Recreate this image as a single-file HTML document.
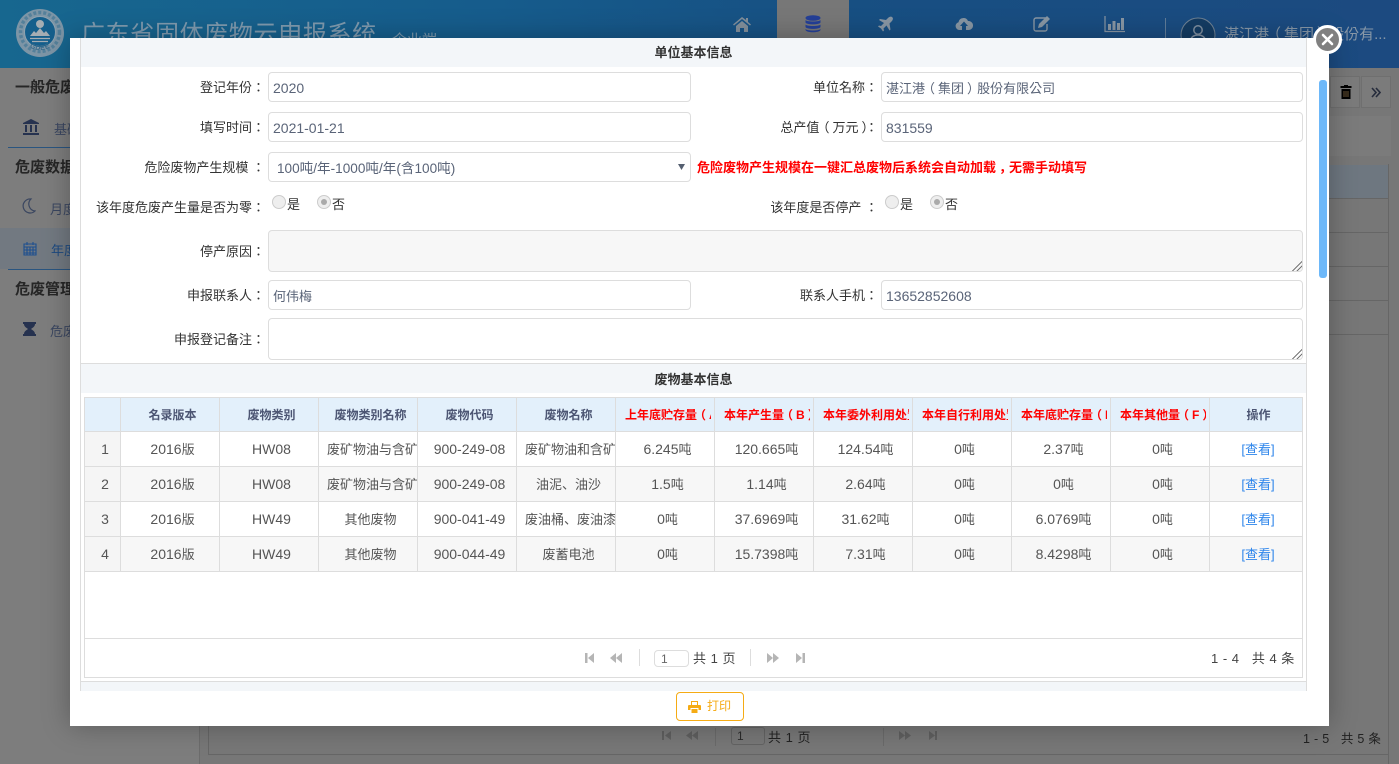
<!DOCTYPE html>
<html lang="zh-TW"><head><meta charset="utf-8"><title>广东省固体废物云申报系统</title>
<style>
*{box-sizing:border-box}
html,body{margin:0;padding:0;width:1399px;height:764px;overflow:hidden;background:#777}
body{position:relative;font-family:"Liberation Sans","Noto Sans CJK TC",sans-serif;font-size:13px;color:#333}
i{font-style:normal;font-size:14px;line-height:0}
u{text-decoration:none;position:relative;left:-3px}
s{text-decoration:none;position:relative;left:3px}
.a{position:absolute;white-space:nowrap}
svg{position:absolute;display:block}
.l{position:absolute;white-space:nowrap;text-align:right;height:18px;line-height:18px;color:#333;margin-top:1px}
.i{position:absolute;border:1px solid #ddd;border-radius:4px;background:#fff;color:#5a6478;padding:1px 0 0 4px;line-height:29px;white-space:nowrap;font-size:13px}
.r{position:absolute;width:14px;height:14px;border-radius:50%;background:#eee;border:1px solid #ccc}
.r.k:after{content:"";position:absolute;left:3px;top:3px;width:6px;height:6px;border-radius:50%;background:#aaa}
.h{position:absolute;left:81px;width:1225px;height:29px;background:#f3f6f9;text-align:center;font-weight:bold;line-height:29px;font-size:13px;color:#333}
.hl{position:absolute;background:#ddd}
.grip{position:absolute;width:11px;height:11px;background:linear-gradient(135deg,transparent 54%,#777 54%,#777 61%,transparent 61%,transparent 73%,#777 73%,#777 80%,transparent 80%)}
.c{position:absolute;overflow:hidden;white-space:nowrap;text-align:center;border-right:1px solid #ddd;border-bottom:1px solid #ddd;line-height:35px;height:35px;color:#555;font-size:13px;padding-left:5px}
.c.tl{text-align:left;padding-left:8px}
.c.lk{color:#2f86eb;border-right:0;width:92px;padding-left:4px}
.th{background:#e3f0fb;color:#4c5573;font-size:12px;font-weight:bold;line-height:35px;height:34px;padding-left:5px}
.th.red{color:#f00;text-align:left;padding-left:9px}
.th.red span{display:block;overflow:hidden;width:86px}
.g{background:#f5f5f5}
.side{position:absolute;white-space:nowrap;font-size:15px;font-weight:bold;color:#262626;line-height:20px}
</style></head><body>

<!-- dimmed page -->
<div class="a" style="left:0;top:0;width:1399px;height:68px;background:linear-gradient(90deg,#17678f 0,#165c8c 35%,#174f82 60%,#1c4a80 100%)"></div>
<div class="a" style="left:0;top:68px;width:1399px;height:696px;background:#777"></div>
<div class="a" style="left:0;top:68px;width:200px;height:696px;background:#7d7d7d"></div>
<div class="a" style="left:0;top:228px;width:200px;height:41px;background:#727981"></div>
<div class="a" style="left:8px;top:147px;width:192px;height:1px;background:#2a5580"></div>
<div class="a" style="left:8px;top:269px;width:192px;height:1px;background:#2a5580"></div>
<div class="side" style="left:15px;top:78px">一般危废</div>
<div class="side" style="left:15px;top:158px">危废数据</div>
<div class="side" style="left:15px;top:280px">危废管理</div>
<div class="a" style="left:54px;top:119px;font-size:13px;color:#3a4660">基础</div>
<div class="a" style="left:50px;top:199px;font-size:13px;color:#3a4660">月度</div>
<div class="a" style="left:51px;top:240px;font-size:13px;color:#1d4a80">年度</div>
<div class="a" style="left:50px;top:321px;font-size:13px;color:#3a4660">危废</div>
<svg style="left:22px;top:118px" width="18" height="18" viewBox="0 0 18 18"><path d="M9 1 1 5v1h16V5zM3 7h2v7H3zM8 7h2v7H8zM13 7h2v7h-2zM1 15h16v2H1z" fill="#26324f"/></svg>
<svg style="left:22px;top:198px" width="14" height="16" viewBox="0 0 14 16"><path d="M9 1a7 7 0 1 0 4 12A7 7 0 0 1 9 1z" fill="none" stroke="#3a4660" stroke-width="1.2"/></svg>
<svg style="left:23px;top:241px" width="14" height="15" viewBox="0 0 14 15"><path d="M1 3h12v11H1zM1 6h12M4 1v3M10 1v3M4 6v8M7 6v8M10 6v8M1 9h12M1 12h12" fill="none" stroke="#1d4f8f" stroke-width="1.1"/></svg>
<svg style="left:23px;top:322px" width="13" height="14" viewBox="0 0 13 14"><path d="M0 0h13v2h-1c0 3-3 4-4 5 1 1 4 2 4 5h1v2H0v-2h1c0-3 3-4 4-5-1-1-4-2-4-5H0z" fill="#26324f"/></svg>

<!-- logo -->
<svg style="left:15px;top:8px" width="50" height="50" viewBox="0 0 50 50"><defs><path id="arc" d="M6 27a19.500 19.500 0 0 0 38 0"/></defs><circle cx="25" cy="25" r="24" fill="#7d95a6"/><circle cx="25" cy="24" r="19.500" fill="none" stroke="#55809a" stroke-width="3.500" stroke-dasharray="3 2"/><circle cx="25" cy="24" r="15.500" fill="#155f8c" stroke="#8fa3b0" stroke-width="1"/><circle cx="25" cy="16" r="4" fill="#a5adb3"/><path d="M15 28l4-5 2 2 4-5 4 5 2-2 4 5z" fill="#a5adb3"/><path d="M15 30.500h20M17 33.500h16" stroke="#a5adb3" stroke-width="1.2"/><text font-size="7" font-weight="bold" fill="#3b6c8c" font-family="Liberation Sans,sans-serif" letter-spacing=".5"><textPath href="#arc" startOffset="50%" text-anchor="middle">GDEE</textPath></text></svg>
<div class="a" style="left:81px;top:20px;font-size:24px;color:#7f9aae;line-height:30px;letter-spacing:.65px">广东省固体废物云申报系统</div>
<div class="a" style="left:392px;top:29px;font-size:15px;color:#7f9aae">企业端</div>

<!-- nav -->
<div class="a" style="left:777px;top:0;width:72px;height:68px;background:#777"></div>
<svg style="left:733px;top:16px" width="18" height="16" viewBox="0 0 18 16"><path d="M9 1 0 8.500l1 1L9 3l8 6.500 1-1-3-2.500V2h-2v2zM3 10v6h4v-4h4v4h4v-6L9 5z" fill="#828f9b"/></svg>
<svg style="left:805px;top:15px" width="16" height="18" viewBox="0 0 16 18" fill="#243f97"><ellipse cx="8" cy="3" rx="7.500" ry="2.800"/><path d="M.5 5c1 2 14 2 15 0v2.500c-1 2.500-14 2.500-15 0zM.5 9.500c1 2 14 2 15 0V12c-1 2.500-14 2.500-15 0zM.5 14c1 2 14 2 15 0v1c-1 3-14 3-15 0z"/></svg>
<svg style="left:878px;top:16px" width="15" height="16" viewBox="0 0 15 16"><path d="M14 1c-1-1-3 0-4 1L8 4 2 3 1 4l5 3-3 3-2-.5-1 1 3 2 2 3 1-1-.5-2 3-3 3 5 1-1-1-6 2-2c1-1 2-3 1-4z" fill="#8896a3"/></svg>
<svg style="left:955px;top:16px" width="18" height="15" viewBox="0 0 18 15"><path d="M4 14a4 4 0 0 1-.5-7.800A5 5 0 0 1 13 5a4.500 4.500 0 0 1 1 9h-3v-4h2L9 5.500 5 10h2v4z" fill="#8896a3"/></svg>
<svg style="left:1033px;top:15px" width="18" height="17" viewBox="0 0 18 17"><path d="M13 3H3a2 2 0 0 0-2 2v9a2 2 0 0 0 2 2h9a2 2 0 0 0 2-2V9" fill="none" stroke="#8896a3" stroke-width="1.400"/><path d="M6 9 14 1l3 3-8 8-4 1z" fill="#8896a3"/></svg>
<svg style="left:1104px;top:15px" width="22" height="18" viewBox="0 0 22 18"><path d="M1 1v15.500h20" fill="none" stroke="#8896a3" stroke-width="1.200"/><path d="M4 9h3v6H4zM8.500 6h3v9h-3zM13 8h3v7h-3zM17 3h3v12h-3z" fill="#8896a3"/></svg>
<div class="a" style="left:1165px;top:18px;width:1px;height:30px;background:#5f7c99"></div>
<svg style="left:1180px;top:17px" width="36" height="36" viewBox="0 0 36 36"><circle cx="18" cy="18" r="17" fill="#143c63" stroke="#6f8294" stroke-width="1"/><circle cx="18" cy="13" r="4.200" fill="none" stroke="#7f8fa0" stroke-width="1.500"/><path d="M11 25v-2c0-3 3-5 7-5s7 2 7 5v2z" fill="none" stroke="#7f8fa0" stroke-width="1.500"/></svg>
<div class="a" style="left:1224px;top:25px;font-size:15px;line-height:20px;color:#8797a7">湛江港<u>（</u>集团<s>）</s>股份有...</div>

<!-- bg right -->
<div class="a" style="left:1330px;top:76px;width:30px;height:32px;border:1px solid #6f6f6f;background:#7b7b7b"></div>
<div class="a" style="left:1361px;top:76px;width:30px;height:32px;border:1px solid #6f6f6f;background:#7b7b7b"></div>
<svg style="left:1340px;top:85px" width="12" height="14" viewBox="0 0 12 14"><path d="M4 1V0h4v1h3.500v2H.5V1zM1.500 4h9v10h-9z" fill="#000"/><path d="M4 6v6M6 6v6M8 6v6" stroke="#6b5535"/></svg>
<svg style="left:1371px;top:87px" width="10" height="11" viewBox="0 0 10 11"><path d="M1 1l4 4.500-4 4.500M5 1l4 4.500-4 4.500" fill="none" stroke="#262c3c" stroke-width="1.600"/></svg>
<div class="a" style="left:1329px;top:116px;width:62px;height:40px;background:#7b7b7b"></div>
<div class="a" style="left:1329px;top:164px;width:60px;height:600px;border-right:1px solid #666"></div>
<div class="a" style="left:1329px;top:165px;width:59px;height:34px;background:#6e7780"></div>
<div class="a" style="left:1329px;top:198px;width:59px;height:1px;background:#666"></div>
<div class="a" style="left:1329px;top:232px;width:59px;height:1px;background:#666"></div>
<div class="a" style="left:1329px;top:266px;width:59px;height:1px;background:#666"></div>
<div class="a" style="left:1329px;top:300px;width:59px;height:1px;background:#666"></div>
<div class="a" style="left:1329px;top:334px;width:59px;height:1px;background:#666"></div>
<!-- bg bottom pager -->
<div class="a" style="left:199px;top:726px;width:1px;height:38px;background:#6c6c6c"></div>
<div class="a" style="left:208px;top:726px;width:1px;height:29px;background:#666"></div>
<div class="a" style="left:208px;top:754px;width:1180px;height:1px;background:#666"></div>
<div class="a" style="left:731px;top:727px;width:34px;height:18px;border:1px solid #636363;border-radius:3px;font-size:12px;line-height:16px;padding-left:5px;color:#2a2a2a">1</div>
<div class="a" style="left:768px;top:727px;font-size:13px;color:#222;letter-spacing:.5px">共 1 页</div>
<div class="a" style="left:1303px;top:728px;font-size:12.500px;color:#222;letter-spacing:.3px">1 - 5&nbsp;&nbsp;&nbsp;共 5 条</div>
<svg style="left:662px;top:730px" width="48" height="11" viewBox="0 0 48 11" fill="#5f5f5f"><path d="M0 1h2v9H0zM9 1v9L3 5.500zM30 1v9l-6-4.500zM36 1v9l-6-4.500z"/></svg>
<svg style="left:899px;top:730px" width="40" height="11" viewBox="0 0 40 11" fill="#5f5f5f"><path d="M0 1v9l6-4.500zM6 1v9l6-4.500zM30 1v9l6-4.500zM36 1h2v9h-2z"/></svg>
<div class="a" style="left:715px;top:728px;width:1px;height:18px;background:#6a6a6a"></div>
<div class="a" style="left:883px;top:728px;width:1px;height:18px;background:#6a6a6a"></div>

<!-- modal shadow + modal -->
<div class="a" style="left:70px;top:38px;width:1259px;height:688px;background:#fff;box-shadow:0 0 26px rgba(0,0,0,.28)"></div>
<div class="hl" style="left:80px;top:38px;width:1px;height:653px"></div>
<div class="hl" style="left:1306px;top:38px;width:1px;height:653px"></div>
<div class="h" style="top:38px">单位基本信息</div>

<div class="l" style="left:100px;width:165px;top:78px">登记年份：</div>
<div class="i" style="left:268px;top:72px;width:423px;height:30px;font-size:14px">2020</div>
<div class="l" style="left:700px;width:178px;top:78px">单位名称：</div>
<div class="i" style="left:881px;top:72px;width:422px;height:30px">湛江港<u>（</u>集团<s>）</s>股份有限公司</div>

<div class="l" style="left:100px;width:165px;top:118px">填写时间：</div>
<div class="i" style="left:268px;top:112px;width:423px;height:30px;font-size:14px">2021-01-21</div>
<div class="l" style="left:700px;width:178px;top:118px">总产值<u>（</u>万元<s>）</s>：</div>
<div class="i" style="left:881px;top:112px;width:422px;height:30px;font-size:14px">831559</div>

<div class="l" style="left:100px;width:165px;top:158px">危险废物产生规模 ：</div>
<div class="i" style="left:268px;top:152px;width:423px;height:30px;padding-left:8px;font-size:13.600px">100吨/年-1000吨/年(含100吨)</div>
<svg style="left:678px;top:164px" width="7" height="6" viewBox="0 0 7 6"><path d="M0 0h7L3.500 6z" fill="#555f70"/></svg>
<div class="a" style="left:697px;top:159px;line-height:18px;font-weight:bold;color:#f00">危险废物产生规模在一键汇总废物后系统会自动加载<s lang="zh-CN">，</s>无需手动填写</div>

<div class="l" style="left:90px;width:175px;top:198px">该年度危废产生量是否为零：</div>
<div class="r" style="left:272px;top:195px"></div><div class="a" style="left:287px;top:196px;line-height:18px;color:#333">是</div>
<div class="r k" style="left:317px;top:195px"></div><div class="a" style="left:332px;top:196px;line-height:18px;color:#333">否</div>
<div class="l" style="left:700px;width:178px;top:198px;height:15px;overflow:hidden">该年度是否停产 ：</div>
<div class="r" style="left:885px;top:195px"></div><div class="a" style="left:900px;top:196px;line-height:18px;color:#333">是</div>
<div class="r k" style="left:930px;top:195px"></div><div class="a" style="left:945px;top:196px;line-height:18px;color:#333">否</div>

<div class="l" style="left:100px;width:165px;top:242px">停产原因：</div>
<div class="i" style="left:268px;top:230px;width:1035px;height:42px;background:#f7f7f7"></div>
<div class="grip" style="left:1291px;top:260px"></div>

<div class="l" style="left:100px;width:165px;top:286px">申报联系人：</div>
<div class="i" style="left:268px;top:280px;width:423px;height:30px">何伟梅</div>
<div class="l" style="left:700px;width:178px;top:286px">联系人手机：</div>
<div class="i" style="left:881px;top:280px;width:422px;height:30px;font-size:14px">13652852608</div>

<div class="l" style="left:100px;width:165px;top:330px">申报登记备注：</div>
<div class="i" style="left:268px;top:318px;width:1035px;height:42px"></div>
<div class="grip" style="left:1291px;top:348px"></div>

<div class="hl" style="left:81px;top:363px;width:1225px;height:1px"></div>
<div class="h" style="top:364px;line-height:31px">废物基本信息</div>

<!-- scrollbar -->
<div class="a" style="left:1319px;top:80px;width:8px;height:198px;background:#6db8f9;border-radius:3px"></div>

<!-- grid -->
<div class="a" style="left:84px;top:397px;width:1219px;height:281px;border:1px solid #ddd"></div>
<div class="c th" style="left:85px;top:398px;width:36px"></div>
<div class="c th" style="left:121px;top:398px;width:99px">名录版本</div>
<div class="c th" style="left:220px;top:398px;width:99px">废物类别</div>
<div class="c th" style="left:319px;top:398px;width:99px">废物类别名称</div>
<div class="c th" style="left:418px;top:398px;width:99px">废物代码</div>
<div class="c th" style="left:517px;top:398px;width:99px">废物名称</div>
<div class="c th red" style="left:616px;top:398px;width:99px"><span>上年底贮存量<u>（</u>A<s>）</s></span></div>
<div class="c th red" style="left:715px;top:398px;width:99px"><span>本年产生量<u>（</u>B<s>）</s></span></div>
<div class="c th red" style="left:814px;top:398px;width:99px"><span>本年委外利用处置量</span></div>
<div class="c th red" style="left:913px;top:398px;width:99px"><span>本年自行利用处置量</span></div>
<div class="c th red" style="left:1012px;top:398px;width:99px"><span>本年底贮存量<u>（</u>E<s>）</s></span></div>
<div class="c th red" style="left:1111px;top:398px;width:99px"><span>本年其他量<u>（</u>F<s>）</s></span></div>
<div class="c th" style="left:1210px;top:398px;width:92px;border-right:0">操作</div>

<!-- row 1 -->
<div class="c g" style="left:85px;top:432px;width:36px"><i>1</i></div>
<div class="c" style="left:121px;top:432px;width:99px"><i>2016</i>版</div>
<div class="c" style="left:220px;top:432px;width:99px"><i>HW08</i></div>
<div class="c tl" style="left:319px;top:432px;width:99px">废矿物油与含矿物油废物</div>
<div class="c" style="left:418px;top:432px;width:99px"><i>900-249-08</i></div>
<div class="c tl" style="left:517px;top:432px;width:99px">废矿物油和含矿物油废物</div>
<div class="c" style="left:616px;top:432px;width:99px"><i>6.245</i>吨</div>
<div class="c" style="left:715px;top:432px;width:99px"><i>120.665</i>吨</div>
<div class="c" style="left:814px;top:432px;width:99px"><i>124.54</i>吨</div>
<div class="c" style="left:913px;top:432px;width:99px"><i>0</i>吨</div>
<div class="c" style="left:1012px;top:432px;width:99px"><i>2.37</i>吨</div>
<div class="c" style="left:1111px;top:432px;width:99px"><i>0</i>吨</div>
<div class="c lk" style="left:1210px;top:432px">[查看]</div>
<!-- row 2 -->
<div class="a" style="left:85px;top:467px;width:1217px;height:35px;background:#f7f7f7"></div>
<div class="c g" style="left:85px;top:467px;width:36px"><i>2</i></div>
<div class="c" style="left:121px;top:467px;width:99px"><i>2016</i>版</div>
<div class="c" style="left:220px;top:467px;width:99px"><i>HW08</i></div>
<div class="c tl" style="left:319px;top:467px;width:99px">废矿物油与含矿物油废物</div>
<div class="c" style="left:418px;top:467px;width:99px"><i>900-249-08</i></div>
<div class="c" style="left:517px;top:467px;width:99px">油泥<span lang="zh-CN">、</span>油沙</div>
<div class="c" style="left:616px;top:467px;width:99px"><i>1.5</i>吨</div>
<div class="c" style="left:715px;top:467px;width:99px"><i>1.14</i>吨</div>
<div class="c" style="left:814px;top:467px;width:99px"><i>2.64</i>吨</div>
<div class="c" style="left:913px;top:467px;width:99px"><i>0</i>吨</div>
<div class="c" style="left:1012px;top:467px;width:99px"><i>0</i>吨</div>
<div class="c" style="left:1111px;top:467px;width:99px"><i>0</i>吨</div>
<div class="c lk" style="left:1210px;top:467px">[查看]</div>
<!-- row 3 -->
<div class="c g" style="left:85px;top:502px;width:36px"><i>3</i></div>
<div class="c" style="left:121px;top:502px;width:99px"><i>2016</i>版</div>
<div class="c" style="left:220px;top:502px;width:99px"><i>HW49</i></div>
<div class="c" style="left:319px;top:502px;width:99px">其他废物</div>
<div class="c" style="left:418px;top:502px;width:99px"><i>900-041-49</i></div>
<div class="c tl" style="left:517px;top:502px;width:99px">废油桶<span lang="zh-CN">、</span>废油漆桶</div>
<div class="c" style="left:616px;top:502px;width:99px"><i>0</i>吨</div>
<div class="c" style="left:715px;top:502px;width:99px"><i>37.6969</i>吨</div>
<div class="c" style="left:814px;top:502px;width:99px"><i>31.62</i>吨</div>
<div class="c" style="left:913px;top:502px;width:99px"><i>0</i>吨</div>
<div class="c" style="left:1012px;top:502px;width:99px"><i>6.0769</i>吨</div>
<div class="c" style="left:1111px;top:502px;width:99px"><i>0</i>吨</div>
<div class="c lk" style="left:1210px;top:502px">[查看]</div>
<!-- row 4 -->
<div class="a" style="left:85px;top:537px;width:1217px;height:35px;background:#f7f7f7"></div>
<div class="c g" style="left:85px;top:537px;width:36px"><i>4</i></div>
<div class="c" style="left:121px;top:537px;width:99px"><i>2016</i>版</div>
<div class="c" style="left:220px;top:537px;width:99px"><i>HW49</i></div>
<div class="c" style="left:319px;top:537px;width:99px">其他废物</div>
<div class="c" style="left:418px;top:537px;width:99px"><i>900-044-49</i></div>
<div class="c" style="left:517px;top:537px;width:99px">废蓄电池</div>
<div class="c" style="left:616px;top:537px;width:99px"><i>0</i>吨</div>
<div class="c" style="left:715px;top:537px;width:99px"><i>15.7398</i>吨</div>
<div class="c" style="left:814px;top:537px;width:99px"><i>7.31</i>吨</div>
<div class="c" style="left:913px;top:537px;width:99px"><i>0</i>吨</div>
<div class="c" style="left:1012px;top:537px;width:99px"><i>8.4298</i>吨</div>
<div class="c" style="left:1111px;top:537px;width:99px"><i>0</i>吨</div>
<div class="c lk" style="left:1210px;top:537px">[查看]</div>

<!-- pager -->
<div class="hl" style="left:85px;top:638px;width:1217px;height:1px"></div>
<svg style="left:584px;top:652px" width="40" height="12" viewBox="0 0 40 12" fill="#b5b5b5"><path d="M1 1h2.500v10H1zM10 1v10L4 6zM32 1v10l-6-5zM38 1v10l-6-5z"/></svg>
<div class="hl" style="left:639px;top:649px;width:1px;height:17px"></div>
<div class="a" style="left:654px;top:650px;width:35px;height:17px;border:1px solid #ddd;border-radius:4px;font-size:12px;line-height:16px;padding-left:6px;color:#666">1</div>
<div class="a" style="left:693px;top:650px;line-height:18px;letter-spacing:.5px;color:#444">共 1 页</div>
<div class="hl" style="left:750px;top:649px;width:1px;height:17px"></div>
<svg style="left:767px;top:652px" width="40" height="12" viewBox="0 0 40 12" fill="#b5b5b5"><path d="M0 1v10l6-5zM6 1v10l6-5zM29 1v10l6-5zM35.500 1H38v10h-2.500z"/></svg>
<div class="a" style="left:1211px;top:650px;line-height:18px;font-size:13px;letter-spacing:.5px;color:#444">1 - 4&nbsp;&nbsp;&nbsp;共 4 条</div>

<!-- bottom section -->
<div class="hl" style="left:81px;top:681px;width:1225px;height:1px"></div>
<div class="a" style="left:81px;top:682px;width:1225px;height:9px;background:#f3f6f9"></div>

<!-- print btn -->
<div class="a" style="left:676px;top:692px;width:68px;height:29px;border:1px solid #f5ab14;border-radius:4px;background:#fff;color:#f5ab14;font-size:12px;line-height:27px;padding-left:30px">打印</div>
<svg style="left:688px;top:701px" width="13" height="12" viewBox="0 0 13 12"><path d="M3 0h7v4H9V1H4v3H3zM1 4h11a1 1 0 0 1 1 1v4h-2.500V7h-8v2H0V5a1 1 0 0 1 1-1zM3.500 8h6v4h-6z" fill="#f5ab14"/></svg>

<!-- close -->
<svg style="left:1313px;top:25px" width="29" height="29" viewBox="0 0 29 29"><circle cx="14.500" cy="14.500" r="13" fill="#808080" stroke="#fff" stroke-width="3"/><path d="M10 10l9 9M19 10l-9 9" stroke="#fff" stroke-width="2.600" stroke-linecap="round"/></svg>
</body></html>
